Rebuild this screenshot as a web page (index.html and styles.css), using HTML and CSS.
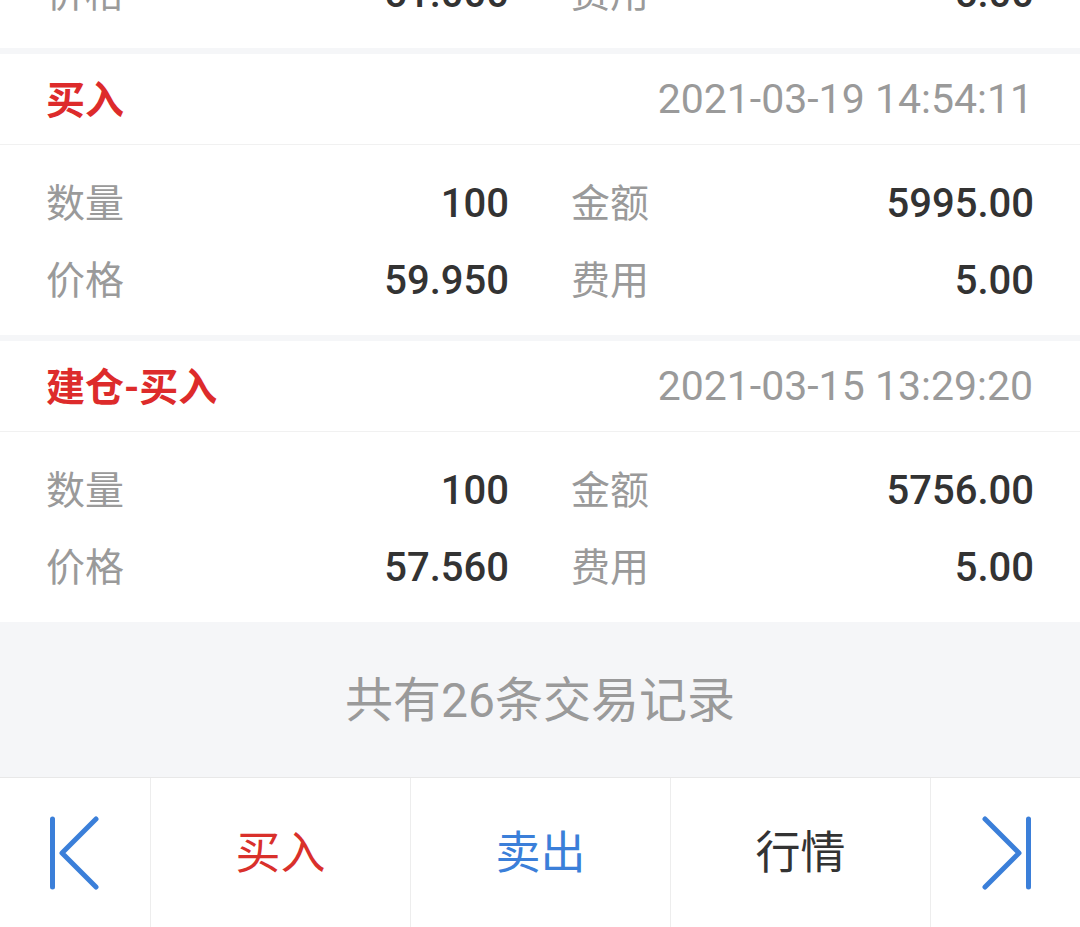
FILE: index.html
```html
<!DOCTYPE html>
<html lang="zh-CN">
<head>
<meta charset="utf-8">
<title>交易记录</title>
<link rel="stylesheet" href="styles.css">
</head>
<body>
<div class="page">
  <div class="list">
    <section class="card">
      <header class="card-head">
        <span class="type">卖出</span>
        <span class="time">2021-03-22 10:12:45</span>
      </header>
      <div class="card-body">
        <div class="cell"><span class="label">数量</span><span class="value">100</span></div>
        <div class="cell"><span class="label">金额</span><span class="value">5100.00</span></div>
        <div class="cell"><span class="label">价格</span><span class="value">51.000</span></div>
        <div class="cell"><span class="label">费用</span><span class="value">5.00</span></div>
      </div>
    </section>
    <section class="card">
      <header class="card-head">
        <span class="type">买入</span>
        <span class="time">2021-03-19 14:54:11</span>
      </header>
      <div class="card-body">
        <div class="cell"><span class="label">数量</span><span class="value">100</span></div>
        <div class="cell"><span class="label">金额</span><span class="value">5995.00</span></div>
        <div class="cell"><span class="label">价格</span><span class="value">59.950</span></div>
        <div class="cell"><span class="label">费用</span><span class="value">5.00</span></div>
      </div>
    </section>
    <section class="card">
      <header class="card-head">
        <span class="type">建仓-买入</span>
        <span class="time">2021-03-15 13:29:20</span>
      </header>
      <div class="card-body">
        <div class="cell"><span class="label">数量</span><span class="value">100</span></div>
        <div class="cell"><span class="label">金额</span><span class="value">5756.00</span></div>
        <div class="cell"><span class="label">价格</span><span class="value">57.560</span></div>
        <div class="cell"><span class="label">费用</span><span class="value">5.00</span></div>
      </div>
    </section>
  </div>
  <div class="summary"><span class="summary-text">共有26条交易记录</span></div>
  <nav class="toolbar">
    <div class="tool">
      <svg class="nav-icon" width="52" height="74" viewBox="0 0 52 74" fill="none" stroke="#3b7fd9" stroke-width="5" stroke-linecap="round" stroke-linejoin="round">
        <line x1="3.5" y1="3" x2="3.5" y2="71"/>
        <polyline points="47,3 13,37 47,71"/>
      </svg>
    </div>
    <div class="tool"><span class="tool-text buy">买入</span></div>
    <div class="tool"><span class="tool-text sell">卖出</span></div>
    <div class="tool"><span class="tool-text quote">行情</span></div>
    <div class="tool">
      <svg class="nav-icon" width="52" height="74" viewBox="0 0 52 74" fill="none" stroke="#3b7fd9" stroke-width="5" stroke-linecap="round" stroke-linejoin="round">
        <polyline points="5,3 39,37 5,71"/>
        <line x1="48.5" y1="3" x2="48.5" y2="71"/>
      </svg>
    </div>
  </nav>
</div>
</body>
</html>
```

FILE: styles.css
```css
* {
  box-sizing: border-box;
}

html, body {
  margin: 0;
  padding: 0;
}

body {
  width: 1080px;
  height: 927px;
  overflow: hidden;
  background: #f5f6f8;
  font-family: Roboto, "Noto Sans CJK SC", sans-serif;
}

.page {
  display: flex;
  flex-direction: column;
  height: 927px;
}

.list {
  display: flex;
  flex-direction: column;
  gap: 6px;
  margin-top: -233px;
}

.card {
  background: #ffffff;
  height: 281px;
}

.card-head {
  height: 91px;
  padding: 0 47px 0 46px;
  display: flex;
  align-items: center;
  justify-content: space-between;
  border-bottom: 1px solid #f1f1f1;
}

.type {
  color: #dd2b2b;
  font-size: 39px;
  font-weight: 700;
  padding-bottom: 5px;
}

.time {
  color: #9a9a9a;
  font-size: 41px;
  font-weight: 400;
}

.card-body {
  display: grid;
  grid-template-columns: 1fr 1fr;
  column-gap: 62px;
  padding: 20px 46px 16px;
}

.cell {
  height: 77px;
  display: flex;
  align-items: center;
  justify-content: space-between;
}

.label {
  color: #9a9a9a;
  font-size: 39px;
  padding-bottom: 7px;
}

.value {
  color: #333333;
  font-size: 40px;
  font-weight: 500;
}

.summary {
  height: 155px;
  display: flex;
  align-items: center;
  justify-content: center;
  background: #f5f6f8;
}

.summary-text {
  color: #9a9a9a;
  font-size: 48px;
  padding-bottom: 8px;
}

.toolbar {
  flex: 1;
  display: grid;
  grid-template-columns: 150px 260px 260px 260px 150px;
  background: #ffffff;
  border-top: 1px solid #e8e8e8;
}

.tool {
  display: flex;
  align-items: center;
  justify-content: center;
}

.tool + .tool {
  border-left: 1px solid #ededed;
}

.tool-text {
  font-size: 45px;
  padding-bottom: 6px;
}

.buy {
  color: #d9302b;
}

.sell {
  color: #3b7fd9;
}

.quote {
  color: #333333;
}

.nav-icon {
  display: block;
}
```
